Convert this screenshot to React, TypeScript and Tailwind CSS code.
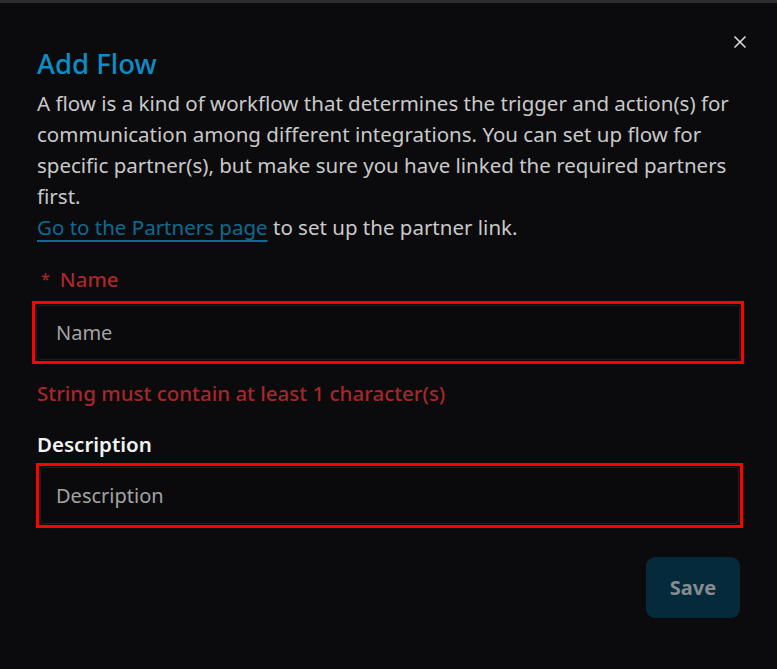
import { X } from 'lucide-react'

export default function App() {
  return (
    <div className="min-h-screen bg-[#0b0b0d] border-t-[3px] border-[#2c2c31] font-['Noto_Sans',sans-serif]">
      <div className="relative pl-[37px] pr-[37px] pt-[43px]">
        <button className="absolute right-[27px] top-[29px] text-[#d8d8d8]">
          <X size={20} strokeWidth={2} />
        </button>

        <h2 className="text-[27.5px] leading-[36px] font-medium text-[#0c8ec5]">Add Flow</h2>

        <p className="mt-[6px] text-[20.5px] leading-[31px] text-[#c9c9c9] whitespace-nowrap">
          A flow is a kind of workflow that determines the trigger and action(s) for
          <br />
          communication among different integrations. You can set up flow for
          <br />
          specific partner(s), but make sure you have linked the required partners
          <br />
          first.
          <br />
          <a className="text-[#0b6b92] underline decoration-2 underline-offset-[5px]">Go to the Partners page</a> to set up the partner link.
        </p>

        <div className="mt-[22px] flex items-center gap-[10px] text-[20.5px] leading-[28px] font-medium text-[#a8282b]">
          <span className="pl-[4px] text-[16px]">*</span>
          <span>Name</span>
        </div>

        <div className="mt-[8px] ml-[-5px] w-[712px] h-[63px] border-[3px] border-[#ff0000] p-[1px]">
          <div className="h-full rounded-[4px] border border-[#1e1e22] bg-[#0a0a0c] flex items-center pl-[19px]">
            <span className="text-[20px] text-[#a3a3a3]">Name</span>
          </div>
        </div>

        <p className="mt-[15px] text-[20.5px] leading-[28px] font-medium text-[#a8262a]">
          String must contain at least 1 character(s)
        </p>

        <div className="mt-[23px] text-[20.5px] leading-[28px] font-semibold text-[#f2f2f2]">Description</div>

        <div className="mt-[5px] ml-[-1px] w-[707px] h-[65px] border-[3px] border-[#ff0000] p-[1px]">
          <div className="h-full rounded-[4px] border border-[#1e1e22] bg-[#0a0a0c] flex items-center pl-[15px]">
            <span className="text-[20px] text-[#a3a3a3]">Description</span>
          </div>
        </div>

        <div className="mt-[29px] flex justify-end">
          <button className="w-[94px] h-[61px] rounded-[9px] bg-[#052a3b] text-[20px] font-bold text-[#858b8f]">
            Save
          </button>
        </div>
      </div>
    </div>
  )
}
